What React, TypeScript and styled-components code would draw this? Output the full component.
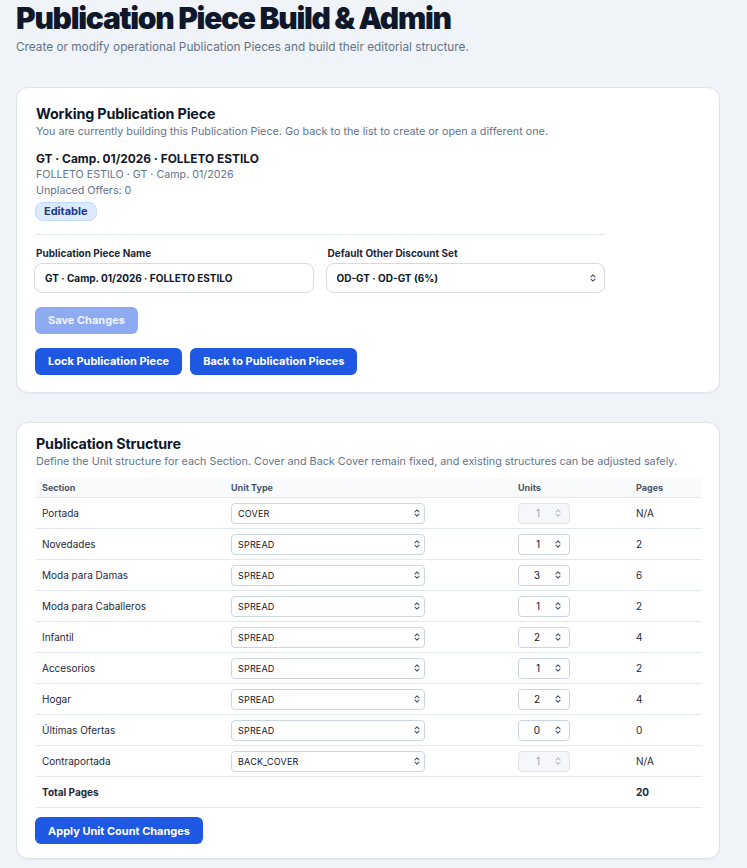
import React from "react";
import styled, { createGlobalStyle } from "styled-components";

const GlobalStyle = createGlobalStyle`
  * { box-sizing: border-box; }
  body {
    margin: 0;
    background: #f0f3f8;
    font-family: Inter, "Noto Sans", "Liberation Sans", sans-serif;
    color: #0f172a;
  }
`;

const Page = styled.div`
  width: 747px;
  padding: 0 27px 11px 16px;
`;

const Title = styled.h1`
  margin: 0;
  font-size: 30px;
  line-height: 36px;
  font-weight: 900;
  letter-spacing: -0.043em;
  color: #0f172a;
`;

const Subtitle = styled.p`
  margin: 2px 0 0;
  font-size: 11.8px;
  line-height: 18px;
  color: #64748b;
`;

const Card = styled.section<{ $top: number; $padTop: number; $padBottom: number }>`
  margin-top: ${(p) => p.$top}px;
  background: #ffffff;
  border: 1px solid #dde3ec;
  border-radius: 12px;
  padding: ${(p) => p.$padTop}px 19px ${(p) => p.$padBottom}px 19px;
  box-shadow: 0 1px 2px rgba(15, 23, 42, 0.04);
`;

const CardTitle = styled.h2`
  margin: 0;
  font-size: 14.3px;
  line-height: 20px;
  font-weight: 700;
  color: #0f172a;
  letter-spacing: -0.01em;
`;

const CardDesc = styled.p`
  margin: 0;
  font-size: 10.8px;
  line-height: 16px;
  color: #64748b;
`;

const PieceName = styled.div`
  margin-top: 10px;
  font-size: 11.9px;
  line-height: 17px;
  font-weight: 700;
  color: #0f172a;
`;

const Meta = styled.div`
  font-size: 10.7px;
  line-height: 16px;
  color: #64748b;
`;

const Badge = styled.span`
  display: inline-flex;
  align-items: center;
  margin: 1px 0 0 -1px;
  height: 19px;
  padding: 0 8px;
  border-radius: 8px;
  background: #dbeafe;
  border: 1px solid #bfdbfe;
  color: #1e3a8a;
  font-size: 11px;
  font-weight: 700;
`;

const Divider = styled.hr`
  margin: 13px 0 0;
  border: 0;
  border-top: 1px solid #e2e8f0;
  width: 570px;
`;

const FormGrid = styled.div`
  margin: 11px 0 0 -2px;
  width: 571px;
  display: grid;
  grid-template-columns: 1fr 1fr;
  gap: 12px;
`;

const Field = styled.label`
  display: flex;
  flex-direction: column;
  gap: 3px;
`;

const Label = styled.span`
  font-size: 10px;
  line-height: 14px;
  font-weight: 700;
  color: #1e293b;
  padding-left: 2px;
`;

const TextInput = styled.input`
  height: 30px;
  border: 1px solid #d5dbe4;
  border-radius: 8px;
  padding: 0 10px;
  font-family: inherit;
  font-size: 10px;
  font-weight: 700;
  color: #0f172a;
  background: #fff;
  outline: none;
`;

const SelectWrap = styled.div<{ $w?: number }>`
  position: relative;
  width: ${(p) => (p.$w ? `${p.$w}px` : "100%")};
`;

const Select = styled.select<{ $size: "lg" | "sm" }>`
  appearance: none;
  width: 100%;
  height: ${(p) => (p.$size === "lg" ? 30 : 21)}px;
  border: 1px solid ${(p) => (p.$size === "lg" ? "#d5dbe4" : "#cbd5e1")};
  border-radius: ${(p) => (p.$size === "lg" ? 8 : 4)}px;
  padding: 0 ${(p) => (p.$size === "lg" ? 10 : 6)}px;
  font-family: inherit;
  font-size: ${(p) => (p.$size === "lg" ? 10 : 9)}px;
  font-weight: ${(p) => (p.$size === "lg" ? 700 : 400)};
  letter-spacing: ${(p) => (p.$size === "lg" ? 0 : "0.02em")};
  color: #0f172a;
  background: #fff;
  outline: none;
`;

const Chevrons = styled.svg<{ $right: number; $muted?: boolean }>`
  position: absolute;
  right: ${(p) => p.$right}px;
  top: 50%;
  transform: translateY(-50%);
  pointer-events: none;
  stroke: ${(p) => (p.$muted ? "#b6bec9" : "#475569")};
`;

const UpDown = ({ right, muted }: { right: number; muted?: boolean }) => (
  <Chevrons $right={right} $muted={muted} width="6" height="9" viewBox="0 0 6 9" fill="none" strokeWidth="1.1" strokeLinecap="round" strokeLinejoin="round">
    <path d="M1 3.4 L3 1.4 L5 3.4" />
    <path d="M1 5.6 L3 7.6 L5 5.6" />
  </Chevrons>
);

const ButtonRow = styled.div<{ $top: number }>`
  margin: ${(p) => p.$top}px 0 0 -1px;
  display: flex;
  gap: 8px;
`;

const Button = styled.button<{ $disabled?: boolean }>`
  height: 27px;
  padding: 0 13px;
  border: 0;
  border-radius: 6px;
  background: ${(p) => (p.$disabled ? "#8eabf2" : "#1f58e3")};
  color: ${(p) => (p.$disabled ? "#eef3fe" : "#ffffff")};
  font-family: inherit;
  font-size: 11px;
  font-weight: 700;
  cursor: ${(p) => (p.$disabled ? "default" : "pointer")};
`;

const Table = styled.table`
  margin-top: 8px;
  width: 100%;
  border-collapse: collapse;
  table-layout: fixed;
`;

const Th = styled.th<{ $w: number }>`
  width: ${(p) => p.$w}px;
  height: 20px;
  padding: 0 6px;
  text-align: left;
  font-size: 9px;
  font-weight: 700;
  color: #475569;
  background: #f8fafc;
  border-bottom: 1px solid #e2e8f0;
`;

const Td = styled.td<{ $bold?: boolean }>`
  height: 31px;
  padding: 0 6px;
  font-size: 10px;
  font-weight: ${(p) => (p.$bold ? 700 : 400)};
  color: #1e293b;
  border-bottom: 1px solid #e2e8f0;
`;

const NumberBox = styled.div<{ $disabled: boolean }>`
  position: relative;
  width: 52px;
  height: 21px;
  border: 1px solid ${(p) => (p.$disabled ? "#dfe4ea" : "#cbd5e1")};
  border-radius: 4px;
  background: ${(p) => (p.$disabled ? "#f5f7fa" : "#ffffff")};
`;

const NumberInput = styled.input<{ $disabled: boolean }>`
  width: 100%;
  height: 100%;
  border: 0;
  background: transparent;
  text-align: right;
  padding: 0 29px 0 4px;
  font-family: inherit;
  font-size: 10px;
  color: ${(p) => (p.$disabled ? "#94a3b8" : "#0f172a")};
  outline: none;
`;

type Row = { section: string; type: string; units: number; pages: string; fixed: boolean };

const rows: Row[] = [
  { section: "Portada", type: "COVER", units: 1, pages: "N/A", fixed: true },
  { section: "Novedades", type: "SPREAD", units: 1, pages: "2", fixed: false },
  { section: "Moda para Damas", type: "SPREAD", units: 3, pages: "6", fixed: false },
  { section: "Moda para Caballeros", type: "SPREAD", units: 1, pages: "2", fixed: false },
  { section: "Infantil", type: "SPREAD", units: 2, pages: "4", fixed: false },
  { section: "Accesorios", type: "SPREAD", units: 1, pages: "2", fixed: false },
  { section: "Hogar", type: "SPREAD", units: 2, pages: "4", fixed: false },
  { section: "Últimas Ofertas", type: "SPREAD", units: 0, pages: "0", fixed: false },
  { section: "Contraportada", type: "BACK_COVER", units: 1, pages: "N/A", fixed: true },
];

const unitTypes = ["COVER", "SPREAD", "BACK_COVER"];

export default function App() {
  return (
    <Page>
      <GlobalStyle />
      <Title>Publication Piece Build &amp; Admin</Title>
      <Subtitle>Create or modify operational Publication Pieces and build their editorial structure.</Subtitle>

      <Card $top={31} $padTop={16} $padBottom={17}>
        <CardTitle>Working Publication Piece</CardTitle>
        <CardDesc>You are currently building this Publication Piece. Go back to the list to create or open a different one.</CardDesc>
        <PieceName>GT · Camp. 01/2026 · FOLLETO ESTILO</PieceName>
        <Meta>FOLLETO ESTILO · GT · Camp. 01/2026</Meta>
        <Meta>Unplaced Offers: 0</Meta>
        <Badge>Editable</Badge>
        <Divider />
        <FormGrid>
          <Field>
            <Label>Publication Piece Name</Label>
            <TextInput defaultValue="GT · Camp. 01/2026 · FOLLETO ESTILO" />
          </Field>
          <Field>
            <Label>Default Other Discount Set</Label>
            <SelectWrap>
              <Select $size="lg" defaultValue="od-gt">
                <option value="od-gt">OD-GT · OD-GT (6%)</option>
              </Select>
              <UpDown right={9} />
            </SelectWrap>
          </Field>
        </FormGrid>
        <ButtonRow $top={14}>
          <Button $disabled>Save Changes</Button>
        </ButtonRow>
        <ButtonRow $top={14}>
          <Button>Lock Publication Piece</Button>
          <Button>Back to Publication Pieces</Button>
        </ButtonRow>
      </Card>

      <Card $top={29} $padTop={11} $padBottom={14}>
        <CardTitle>Publication Structure</CardTitle>
        <CardDesc>Define the Unit structure for each Section. Cover and Back Cover remain fixed, and existing structures can be adjusted safely.</CardDesc>
        <Table>
          <thead>
            <tr>
              <Th $w={189}>Section</Th>
              <Th $w={287}>Unit Type</Th>
              <Th $w={118}>Units</Th>
              <Th $w={72}>Pages</Th>
            </tr>
          </thead>
          <tbody>
            {rows.map((r) => (
              <tr key={r.section}>
                <Td>{r.section}</Td>
                <Td>
                  <SelectWrap $w={194}>
                    <Select $size="sm" defaultValue={r.type}>
                      {unitTypes.map((t) => (
                        <option key={t} value={t}>
                          {t}
                        </option>
                      ))}
                    </Select>
                    <UpDown right={5} />
                  </SelectWrap>
                </Td>
                <Td>
                  <NumberBox $disabled={r.fixed}>
                    <NumberInput $disabled={r.fixed} disabled={r.fixed} defaultValue={String(r.units)} />
                    <UpDown right={8} muted={r.fixed} />
                  </NumberBox>
                </Td>
                <Td>{r.pages}</Td>
              </tr>
            ))}
            <tr>
              <Td $bold>Total Pages</Td>
              <Td />
              <Td />
              <Td $bold>20</Td>
            </tr>
          </tbody>
        </Table>
        <ButtonRow $top={9}>
          <Button>Apply Unit Count Changes</Button>
        </ButtonRow>
      </Card>
    </Page>
  );
}
